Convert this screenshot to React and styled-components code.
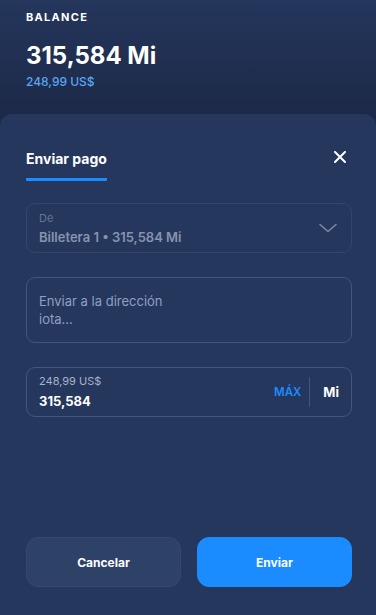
import React from 'react';
import styled, { createGlobalStyle } from 'styled-components';

const GlobalStyle = createGlobalStyle`
  html, body {
    margin: 0;
    padding: 0;
    background: #1d2a48;
  }
  body {
    font-family: Inter, 'Noto Sans', sans-serif;
    -webkit-font-smoothing: antialiased;
  }
  * { box-sizing: border-box; }
`;

const Screen = styled.div`
  width: 376px;
  height: 615px;
  display: flex;
  flex-direction: column;
  overflow: hidden;
  background:
    linear-gradient(128deg, transparent 62%, rgba(255, 255, 255, 0.025) 62%),
    linear-gradient(180deg, #24365c 0%, #1c2846 125px);
`;

const Header = styled.div`
  height: 114px;
  flex-shrink: 0;
  padding: 11px 26px 0;
  color: #fff;
`;

const Label = styled.div`
  font-size: 11px;
  font-weight: 700;
  letter-spacing: 1.3px;
  line-height: 13px;
`;

const Amount = styled.div`
  margin-top: 18px;
  font-size: 24px;
  font-weight: 700;
  line-height: 28px;
`;

const Fiat = styled.div`
  margin-top: 4px;
  font-size: 12px;
  font-weight: 500;
  color: #5aa6f2;
  line-height: 16px;
`;

const Panel = styled.div`
  flex: 1;
  background: #26375d;
  border-radius: 12px 12px 0 0;
  padding: 35px 24px 28px 26px;
  display: flex;
  flex-direction: column;
`;

const TitleRow = styled.div`
  display: flex;
  justify-content: space-between;
  align-items: flex-start;
  margin-bottom: 22px;
`;

const Tab = styled.div`
  font-size: 14px;
  font-weight: 700;
  color: #fff;
  line-height: 18px;
  padding-top: 1px;
  padding-bottom: 10px;
  border-bottom: 3px solid #1a8cff;
  border-radius: 0 0 1px 1px;
`;

const Close = styled.button`
  background: none;
  border: none;
  padding: 0;
  margin: 2px 6px 0 0;
  width: 12px;
  height: 12px;
  display: flex;
  cursor: pointer;
`;

const Field = styled.div`
  width: 326px;
  border: 1px solid ${p => (p.$muted ? '#34456b' : '#43557c')};
  border-radius: 9px;
  display: flex;
  align-items: center;
  margin-bottom: ${p => p.$gap || 0}px;
  min-height: ${p => p.$h}px;
  padding: 0 0 0 12px;
`;

const FieldText = styled.div`
  flex: 1;
  display: flex;
  flex-direction: column;
`;

const SmallLabel = styled.div`
  font-size: 11px;
  line-height: 14px;
  color: ${p => p.$color || '#66758f'};
`;

const SelectValue = styled.div`
  font-size: 13px;
  font-weight: 600;
  line-height: 18px;
  color: #8794ad;
  margin-top: 3px;
`;

const Placeholder = styled.div`
  font-size: 13px;
  line-height: 18px;
  color: #8da0c2;
`;

const AmountValue = styled.div`
  font-size: 13px;
  font-weight: 700;
  line-height: 18px;
  color: #fff;
  margin-top: 4px;
`;

const Chevron = styled.div`
  width: 18px;
  margin-right: 14px;
  display: flex;
`;

const Max = styled.span`
  font-size: 11.5px;
  font-weight: 600;
  color: #1a8cff;
  padding: 0 8px 0 0;
`;

const Divider = styled.div`
  width: 1px;
  align-self: stretch;
  margin: 9px 0;
  background: #43557c;
`;

const Unit = styled.span`
  padding: 0 12px 0 13px;
  font-size: 13px;
  font-weight: 700;
  color: #fff;
`;

const Actions = styled.div`
  margin-top: auto;
  display: flex;
  gap: 16px;
`;

const Button = styled.button`
  flex: 1;
  height: 50px;
  border-radius: 12px;
  font-family: Inter, 'Noto Sans', sans-serif;
  font-size: 12px;
  font-weight: 700;
  color: #fff;
  cursor: pointer;
  border: 1px solid ${p => (p.$primary ? '#1a8cff' : '#34476e')};
  background: ${p => (p.$primary ? '#1a8cff' : '#2e4166')};
`;

const App = () => {
  return (
    <Screen>
      <GlobalStyle />
      <Header>
        <Label>BALANCE</Label>
        <Amount>315,584 Mi</Amount>
        <Fiat>248,99 US$</Fiat>
      </Header>
      <Panel>
        <TitleRow>
          <Tab>Enviar pago</Tab>
          <Close aria-label="close">
            <svg width="12" height="12" viewBox="0 0 12 12">
              <path d="M1 1L11 11M11 1L1 11" stroke="#fff" strokeWidth="2" strokeLinecap="round" />
            </svg>
          </Close>
        </TitleRow>

        <Field $h={50} $gap={24} $muted>
          <FieldText>
            <SmallLabel>De</SmallLabel>
            <SelectValue>Billetera 1 • 315,584 Mi</SelectValue>
          </FieldText>
          <Chevron>
            <svg width="18" height="10" viewBox="0 0 18 10">
              <path d="M1 1.5L9 8.5L17 1.5" stroke="#7c89a3" strokeWidth="1.6" fill="none" strokeLinecap="round" strokeLinejoin="round" />
            </svg>
          </Chevron>
        </Field>

        <Field $h={66} $gap={24}>
          <FieldText>
            <Placeholder>Enviar a la dirección</Placeholder>
            <Placeholder>iota...</Placeholder>
          </FieldText>
        </Field>

        <Field $h={50}>
          <FieldText>
            <SmallLabel $color="#a6b3ca">248,99 US$</SmallLabel>
            <AmountValue>315,584</AmountValue>
          </FieldText>
          <Max>MÁX</Max>
          <Divider />
          <Unit>Mi</Unit>
        </Field>

        <Actions>
          <Button>Cancelar</Button>
          <Button $primary>Enviar</Button>
        </Actions>
      </Panel>
    </Screen>
  );
};

export default App;
